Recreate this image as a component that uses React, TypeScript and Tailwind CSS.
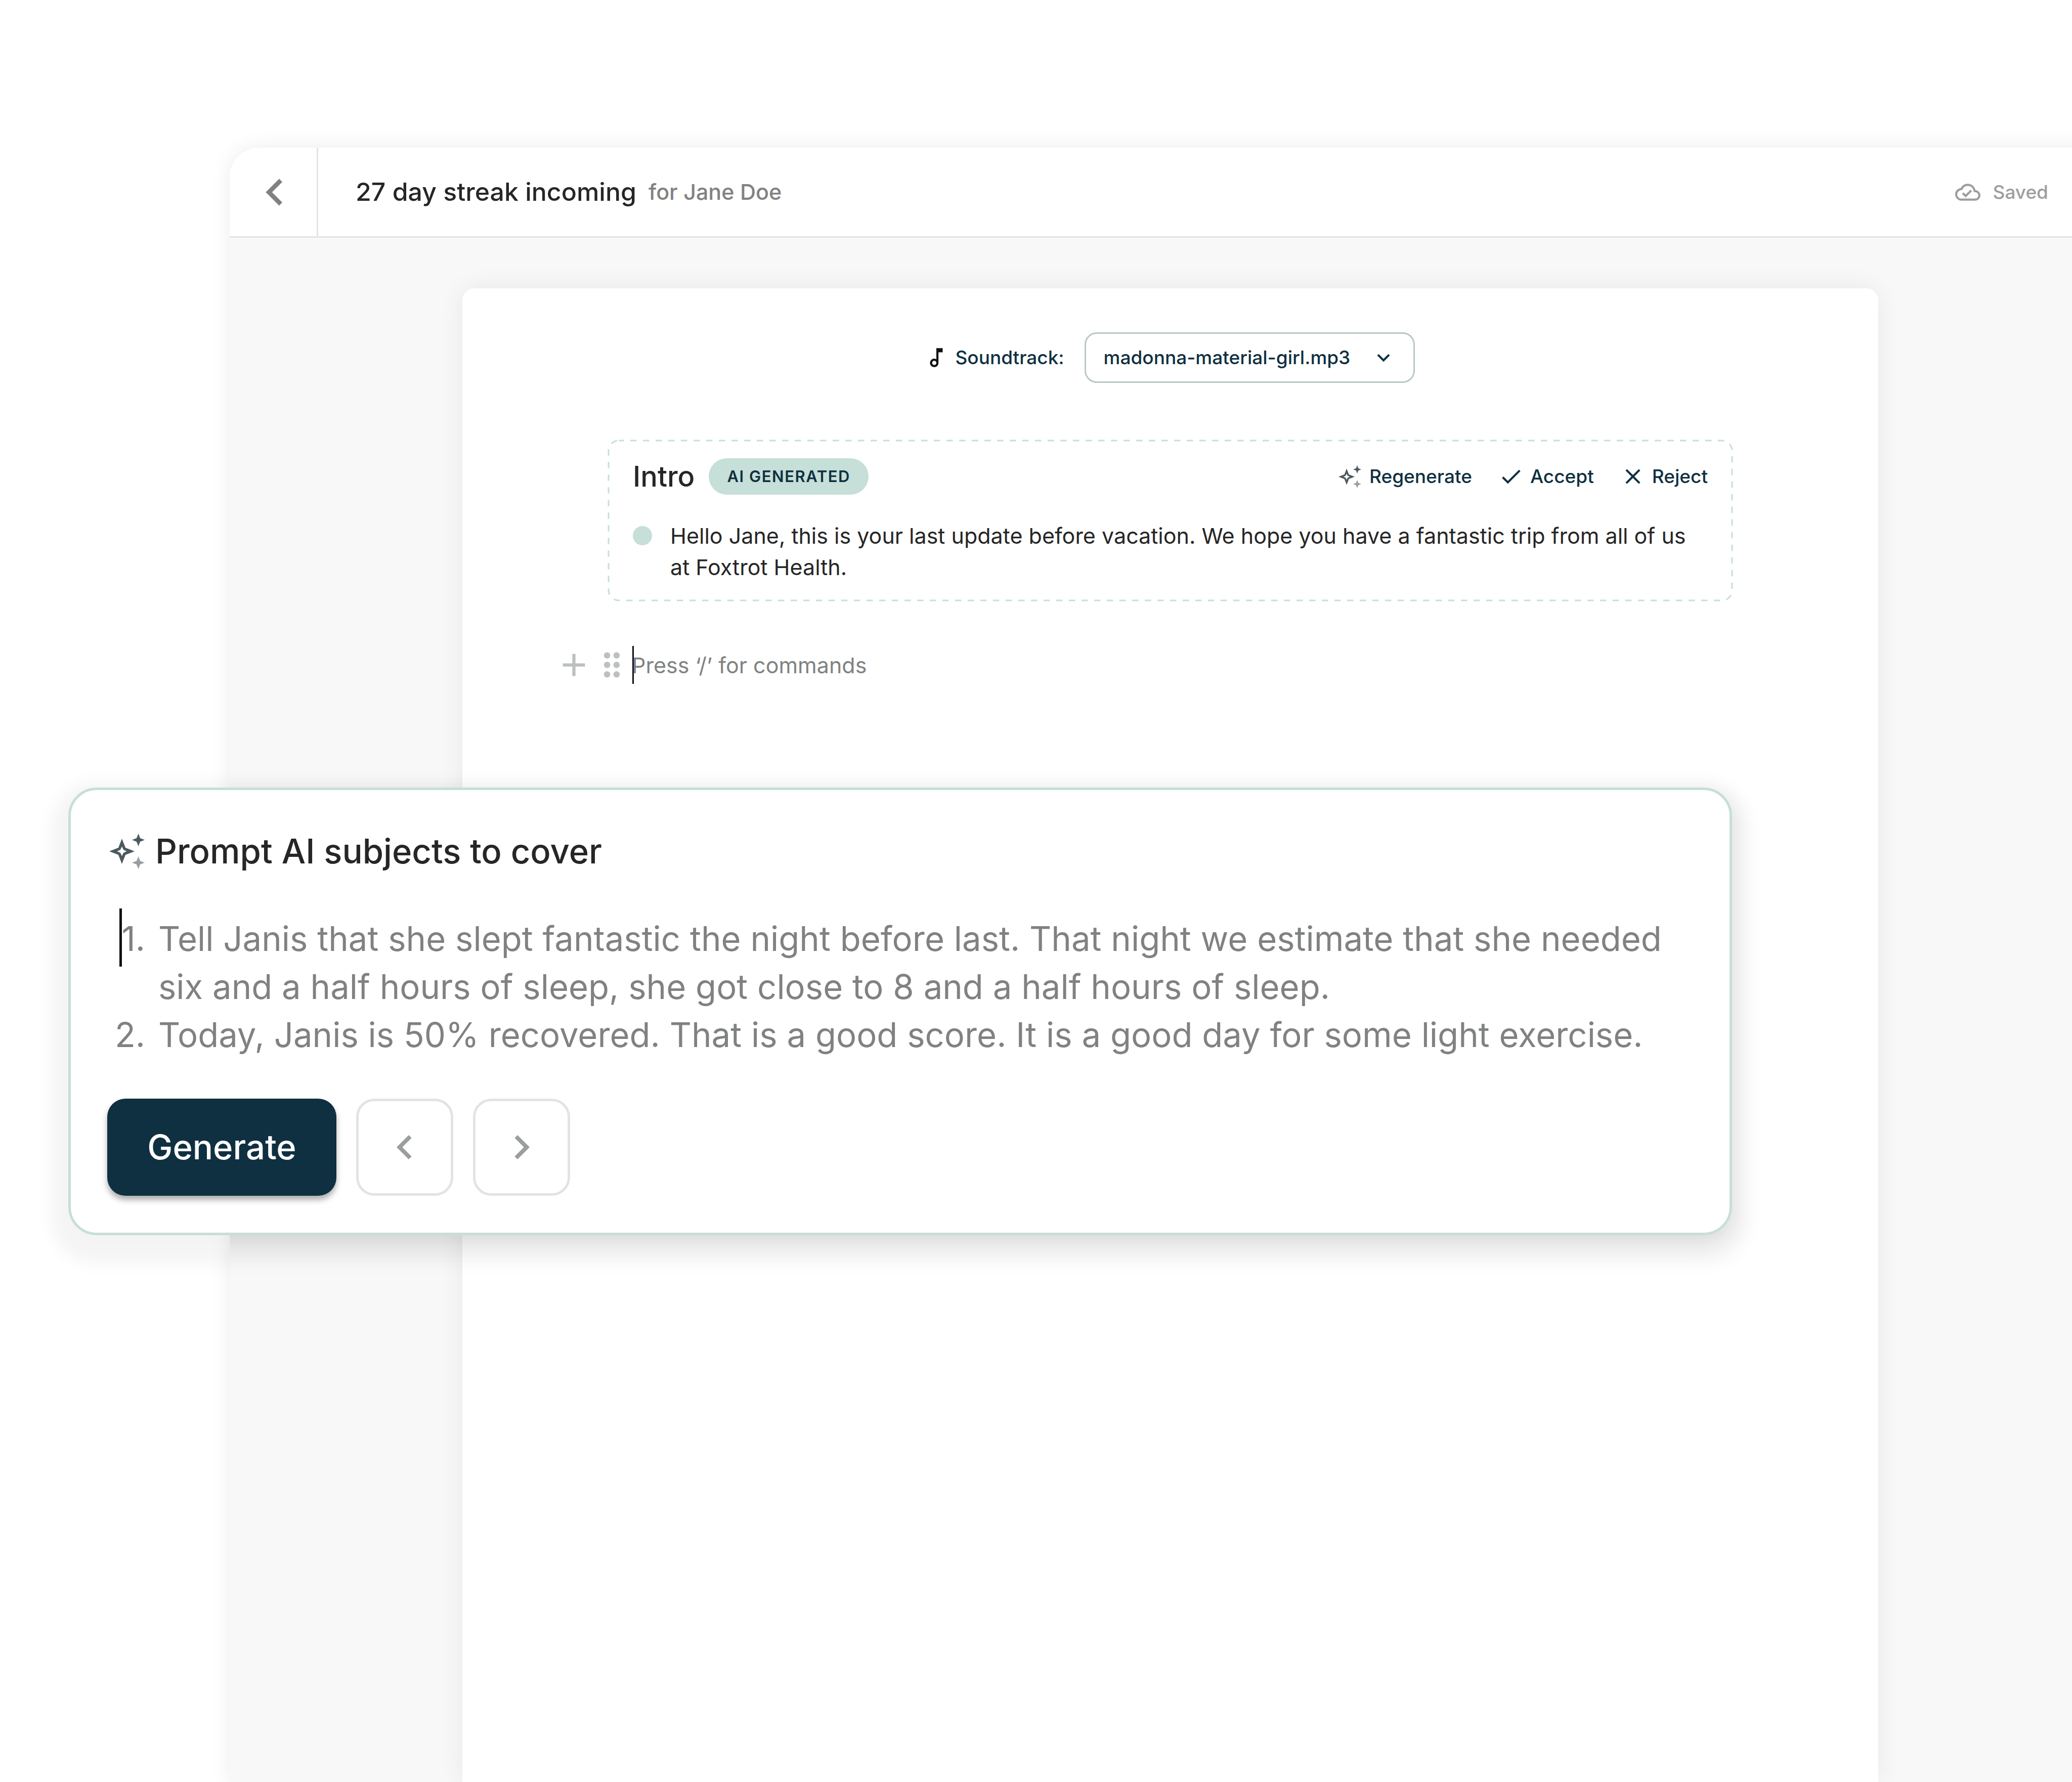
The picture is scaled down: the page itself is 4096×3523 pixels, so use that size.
import React, { useState } from 'react';
import {
  MdAdd,
  MdCheck,
  MdChevronLeft,
  MdChevronRight,
  MdClose,
  MdDragIndicator,
  MdExpandMore,
  MdOutlineCloudDone,
  MdOutlineMusicNote,
} from 'react-icons/md';

const tracks = ['madonna-material-girl.mp3'];

const prompts = [
  'Tell Janis that she slept fantastic the night before last. That night we estimate that she needed six and a half hours of sleep, she got close to 8 and a half hours of sleep.',
  'Today, Janis is 50% recovered. That is a good score. It is a good day for some light exercise.',
];

function Sparkles({ className }: { className?: string }) {
  return (
    <svg viewBox="0 0 70 70" className={className} aria-hidden="true">
      <path
        fill="#4c5a60"
        fillRule="evenodd"
        d="M25 10 32 28 50 35 32 42 25 60 18 42 0 35 18 28ZM25 25.5 22 32 15.5 35 22 38 25 44.5 28 38 34.5 35 28 32Z"
      />
      <path fill="#4c5a60" d="M57.5 0 61 9 70 12.5 61 16 57.5 25 54 16 45 12.5 54 9Z" />
      <path fill="#9b9e9e" d="M57.5 45 61 54 70 57.5 61 61 57.5 70 54 61 45 57.5 54 54Z" />
    </svg>
  );
}

function Header() {
  return (
    <header className="flex h-[178px] items-stretch border-b-[3px] border-[#e2e3e2] bg-white">
      <button aria-label="Back" className="flex w-[175px] items-center justify-center border-r-[3px] border-[#e2e3e2] pl-[6px] text-[#808281]">
        <MdChevronLeft className="size-[106px]" />
      </button>
      <div className="flex flex-1 items-center gap-[24px] pl-[74px] font-medium">
        <h1 className="text-[50px] text-[#262626]">27 day streak incoming</h1>
        <span className="text-[43px] text-[#808281]">for Jane Doe</span>
      </div>
      <div className="flex items-center gap-[24px] pr-[124px] font-medium text-[#9b9e9e]">
        <MdOutlineCloudDone className="size-[50px]" />
        <span className="text-[37px]">Saved</span>
      </div>
    </header>
  );
}

function Soundtrack() {
  const [track, setTrack] = useState(tracks[0]);

  return (
    <div className="flex items-center justify-center pr-[4px] text-[37px] font-medium text-[#0f3040]">
      <MdOutlineMusicNote className="size-[50px] text-[#111111]" />
      <label htmlFor="soundtrack" className="ml-[12px]">Soundtrack:</label>
      <div className="relative ml-[40px]">
        <select
          id="soundtrack"
          value={track}
          onChange={e => setTrack(e.target.value)}
          className="h-[100px] w-[653px] appearance-none rounded-[24px] border-[3px] border-[#b9c8c5] bg-white pl-[35px]"
        >
          {tracks.map(t => (
            <option key={t}>{t}</option>
          ))}
        </select>
        <MdExpandMore className="pointer-events-none absolute right-[37px] top-[25px] size-[50px]" />
      </div>
    </div>
  );
}

function IntroBlock() {
  return (
    <section className="relative mt-[112px] px-[50px] pb-[37px] pt-[37px]">
      <svg className="pointer-events-none absolute inset-0 size-full overflow-visible p-[2px]" aria-hidden="true">
        <rect
          width="100%"
          height="100%"
          rx="20"
          fill="none"
          stroke="#c6dfd8"
          strokeWidth="3"
          strokeDasharray="12.5 12.5"
          strokeDashoffset="2"
        />
      </svg>
      <div className="flex h-[72px] items-center">
        <h2 className="text-[56px] font-medium text-[#262626]">Intro</h2>
        <span className="ml-[28px] flex h-[72px] items-center rounded-full bg-[#c6dfd8] px-[36px] text-[31px] font-semibold tracking-wider text-[#0f3040]">
          AI GENERATED
        </span>
        <div className="ml-auto flex gap-[52px] text-[37px] font-medium text-[#0f3040]">
          <button className="flex items-center gap-[16px]">
            <Sparkles className="size-[45px]" />
            Regenerate
          </button>
          <button className="flex items-center gap-[13px]">
            <MdCheck className="size-[50px]" />
            Accept
          </button>
          <button className="flex items-center gap-[13px]">
            <MdClose className="size-[50px]" />
            Reject
          </button>
        </div>
      </div>
      <div className="mt-[50px] flex gap-[36px] text-[43px] leading-[62px] text-[#262626]">
        <span className="mt-[12px] size-[38px] shrink-0 rounded-full bg-[#c6dfd8]" />
        <p>Hello Jane, this is your last update before vacation. We hope you have a fantastic trip from all of us at Foxtrot Health.</p>
      </div>
    </section>
  );
}

function CommandLine() {
  return (
    <div className="-ml-[104px] mt-[88px] flex items-center text-[#bcc0c0]">
      <button aria-label="Add block">
        <MdAdd className="size-[75px]" />
      </button>
      <button aria-label="Move block">
        <MdDragIndicator className="size-[75px]" />
      </button>
      <div className="ml-[3px] h-[75px] flex-1 border-l-[3px] border-[#111111]">
        <input
          aria-label="Command"
          placeholder="Press ‘/’ for commands"
          className="-ml-[4px] h-full w-full bg-transparent text-[43px] outline-none placeholder:text-[#808281]"
        />
      </div>
    </div>
  );
}

function PromptCard() {
  return (
    <section className="absolute left-[135px] right-[672px] top-[1557px] rounded-[56px] border-[5px] border-[#c6dfd8] bg-white px-[72px] pb-[73px] pt-[74px] shadow-[0_23px_32px_34px_rgba(0,0,0,0.045)]">
      <div className="flex h-[94px] items-center gap-[21px] pl-[4px]">
        <Sparkles className="size-[70px]" />
        <h2 className="text-[67px] font-medium text-[#262626]">Prompt AI subjects to cover</h2>
      </div>
      <div className="relative mt-[78px]">
        <span className="absolute -top-[12px] left-[24px] h-[115px] w-[5px] bg-[#111111]" />
        <ol className="list-decimal pl-[94px] text-[67px] leading-[95px] text-[#808281] marker:[font-variant-numeric:normal]">
          {prompts.map(p => (
            <li key={p} className="pl-[7px]">{p}</li>
          ))}
        </ol>
      </div>
      <div className="mt-[79px] flex gap-[39px]">
        <button className="h-[192px] w-[453px] rounded-[36px] bg-[#0f3040] text-[67px] font-medium text-white shadow-[0_8px_12px_rgba(20,20,20,0.35)]">
          Generate
        </button>
        <button aria-label="Previous prompt" className="flex size-[192px] items-center justify-center rounded-[36px] border-[5px] border-[#e2e4e3] text-[#9b9e9e]">
          <MdChevronLeft className="size-[96px]" />
        </button>
        <button aria-label="Next prompt" className="flex size-[192px] items-center justify-center rounded-[36px] border-[5px] border-[#e2e4e3] text-[#9b9e9e]">
          <MdChevronRight className="size-[96px]" />
        </button>
      </div>
    </section>
  );
}

export default function App() {
  return (
    <div className="relative flex min-h-screen flex-col overflow-hidden bg-white pl-[454px] pt-[292px] font-['Inter',sans-serif] [font-variation-settings:'opsz'_32]">
      {/* the editor window runs off the right and bottom edges */}
      <div className="-mr-[77px] flex flex-1 flex-col rounded-tl-[58px] shadow-[0_0_40px_rgba(0,0,0,0.08)]">
        <div className="relative flex flex-1 flex-col overflow-hidden rounded-tl-[58px] bg-[#f8f8f8]">
          <Header />
          <main className="mx-[460px] mt-[100px] flex-1 rounded-t-[24px] bg-white px-[287px] pt-[87px] shadow-[0_0_50px_rgba(0,0,0,0.07)]">
            <Soundtrack />
            <IntroBlock />
            <CommandLine />
          </main>
          {/* deeper shadow of the prompt card, only where it falls on the window */}
          <div className="pointer-events-none absolute -left-[319px] right-[749px] top-[1265px] h-[885px] rounded-[56px] shadow-[0_16px_40px_rgba(0,10,5,0.1)]" />
        </div>
      </div>
      <PromptCard />
    </div>
  );
}
